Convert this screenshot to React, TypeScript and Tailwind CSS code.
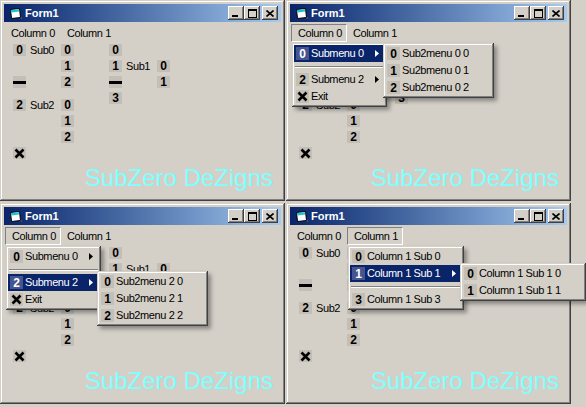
import React from "react";

type Entry = { g: string; label: string; arrow?: boolean; hl?: boolean } | "sep";

const frame =
  "shadow-[inset_-1px_-1px_#404040,inset_1px_1px_#d4d0c8,inset_-2px_-2px_#808080,inset_2px_2px_#ffffff]";
const btn =
  "shadow-[inset_-1px_-1px_#404040,inset_1px_1px_#ffffff,inset_-2px_-2px_#808080,inset_2px_2px_#d4d0c8]";
const menuFrame =
  "shadow-[inset_-1px_-1px_#404040,inset_1px_1px_#d4d0c8,inset_-2px_-2px_#808080,inset_2px_2px_#ffffff,3px_3px_4px_rgba(0,0,0,0.35)]";

const XMark = () => (
  <svg width="11" height="11" viewBox="0 0 11 11">
    <path d="M1.5 1.5 L9.5 9.5 M9.5 1.5 L1.5 9.5" stroke="currentColor" strokeWidth="2.6" />
  </svg>
);

// the little picture boxes the form shows (digit, dash or X)
const Glyph: React.FC<{ g: string; hl?: boolean; tall?: boolean }> = ({ g, hl, tall }) => (
  <div
    className={`w-[13px] ${tall ? "h-[13px]" : "h-[12px]"} flex items-center justify-center text-[12px] font-bold leading-none tracking-normal ${
      hl ? "bg-[#46558f] text-white" : "bg-[#c3bfb7] text-black"
    }`}
  >
    {g === "x" ? <XMark /> : g === "-" ? <div className="w-full h-[3px] bg-black" /> : g}
  </div>
);

const Row: React.FC<{ a?: string; label?: string; b?: string; extra?: string }> = ({ a, label, b, extra }) => (
  <div className={`flex h-[16px] ${extra ?? ""}`}>
    <div className="w-[13px]">{a && <Glyph g={a} />}</div>
    <div className="w-[35px] pl-[4px] h-[12px] leading-[12px] text-black">{label}</div>
    <div className="w-[13px]">{b && <Glyph g={b} />}</div>
  </div>
);

const TitleBar = () => (
  <div className="h-[18px] flex items-center bg-linear-to-r from-[#0a246a] to-[#a6caf0] pl-[5px] pr-[3px]">
    <svg width="14" height="13" viewBox="0 0 14 13">
      <path d="M1.5 2.5 L10.5 1.5 L11.5 10.5 L2.5 11.5 Z" fill="#fff" stroke="#000" />
      <path d="M2 3 L10 2.2 L10.3 4.6 L2.3 5.4 Z" fill="#18c8d0" />
      <path d="M11 11 L13.5 12.5 L12.5 9.5 Z" fill="#505050" />
    </svg>
    <span className="ml-[2px] text-white font-bold text-[11px] tracking-normal">Form1</span>
    <div className="ml-auto flex items-center">
      <div className={`w-[16px] h-[14px] bg-[#d4d0c8] ${btn} flex items-end justify-center pb-[3px] pr-[2px]`}>
        <div className="w-[6px] h-[2px] bg-black" />
      </div>
      <div className={`w-[16px] h-[14px] bg-[#d4d0c8] ${btn} flex items-center justify-center`}>
        <div className="w-[9px] h-[9px] border border-black border-t-2" />
      </div>
      <div className={`ml-[2px] w-[16px] h-[14px] bg-[#d4d0c8] ${btn} flex items-center justify-center`}>
        <svg width="8" height="7" viewBox="0 0 8 7">
          <path d="M0.5 0.5 L7.5 6.5 M7.5 0.5 L0.5 6.5" stroke="#000" strokeWidth="1.6" />
        </svg>
      </div>
    </div>
  </div>
);

const BarItem: React.FC<{ label: string; pressed?: boolean }> = ({ label, pressed }) => (
  <div
    className={`w-[56px] h-[18px] pl-[6px] flex items-center text-black ${
      pressed ? "border border-t-[#808080] border-l-[#808080] border-b-white border-r-white" : ""
    }`}
  >
    {label}
  </div>
);

const Menu: React.FC<{ items: Entry[]; className: string }> = ({ items, className }) => (
  <div className={`absolute z-10 p-[2px] bg-[#d4d0c8] ${menuFrame} ${className}`}>
    {items.map((it, i) =>
      it === "sep" ? (
        <div key={i} className="h-[9px] flex items-center px-[1px]">
          <div className="w-full h-[2px] border-t border-t-[#808080] border-b border-b-white" />
        </div>
      ) : (
        <div
          key={i}
          className={`h-[17px] flex items-center ${it.hl ? "bg-[#0a246a] text-white" : "text-black"}`}
        >
          <div className="w-[17px] pl-[2px] flex">
            <Glyph g={it.g} hl={it.hl} tall />
          </div>
          <span className="flex-1 whitespace-nowrap">{it.label}</span>
          {it.arrow && (
            <svg width="4" height="7" viewBox="0 0 4 7" className="mr-[6px]">
              <path d="M0 0 L4 3.5 L0 7 Z" fill="currentColor" />
            </svg>
          )}
        </div>
      )
    )}
  </div>
);

const Win: React.FC<{ pressed?: number; children?: React.ReactNode }> = ({ pressed, children }) => (
  <div className={`relative w-[285px] h-[201px] bg-[#d4d0c8] p-[4px] flex flex-col ${frame}`}>
    <TitleBar />
    <div className="h-[20px] pt-[2px] pl-[1px] flex">
      <BarItem label="Column 0" pressed={pressed === 0} />
      <BarItem label="Column 1" pressed={pressed === 1} />
    </div>
    <div className="flex-1 flex flex-col pt-[2px]">
      <div className="flex pl-[9px]">
        <div className="flex flex-col w-[96px]">
          <Row a="0" label="Sub0" b="0" />
          <Row b="1" />
          <Row a="-" b="2" />
          <Row a="2" label="Sub2" b="0" extra="mt-[7px]" />
          <Row b="1" />
          <Row b="2" />
          <Row a="x" />
        </div>
        <div className="flex flex-col">
          <Row a="0" />
          <Row a="1" label="Sub1" b="0" />
          <Row a="-" b="1" />
          <Row a="3" />
        </div>
      </div>
      <div className="mt-auto self-end pr-[8px] pb-[7px] text-[24px] leading-[24px] tracking-normal text-[#80ffff]">
        SubZero DeZigns
      </div>
    </div>
    {children}
  </div>
);

export default function App() {
  return (
    <div className="w-[586px] h-[407px] overflow-hidden bg-[#d4d0c8] grid grid-cols-[286px_300px] grid-rows-[203px_204px] font-['Liberation_Sans',Arial,sans-serif] text-[11px] tracking-[-0.4px]">
      <Win />
      <Win pressed={0}>
        <Menu
          className="left-[6px] top-[43px] w-[95px]"
          items={[
            { g: "0", label: "Submenu 0", arrow: true, hl: true },
            "sep",
            { g: "2", label: "Submenu 2", arrow: true },
            { g: "x", label: "Exit" },
          ]}
        />
        <Menu
          className="left-[97px] top-[43px] w-[111px]"
          items={[
            { g: "0", label: "Sub2menu 0 0" },
            { g: "1", label: "Su2bmenu 0 1" },
            { g: "2", label: "Sub2menu 0 2" },
          ]}
        />
      </Win>
      <Win pressed={0}>
        <Menu
          className="left-[6px] top-[43px] w-[95px]"
          items={[
            { g: "0", label: "Submenu 0", arrow: true },
            "sep",
            { g: "2", label: "Submenu 2", arrow: true, hl: true },
            { g: "x", label: "Exit" },
          ]}
        />
        <Menu
          className="left-[97px] top-[68px] w-[111px]"
          items={[
            { g: "0", label: "Sub2menu 2 0" },
            { g: "1", label: "Sub2menu 2 1" },
            { g: "2", label: "Sub2menu 2 2" },
          ]}
        />
      </Win>
      <Win pressed={1}>
        <Menu
          className="left-[62px] top-[43px] w-[116px]"
          items={[
            { g: "0", label: "Column 1 Sub 0" },
            { g: "1", label: "Column 1 Sub 1", arrow: true, hl: true },
            "sep",
            { g: "3", label: "Column 1 Sub 3" },
          ]}
        />
        <Menu
          className="left-[174px] top-[60px] w-[126px]"
          items={[
            { g: "0", label: "Column 1 Sub 1 0" },
            { g: "1", label: "Column 1 Sub 1 1" },
          ]}
        />
      </Win>
    </div>
  );
}
